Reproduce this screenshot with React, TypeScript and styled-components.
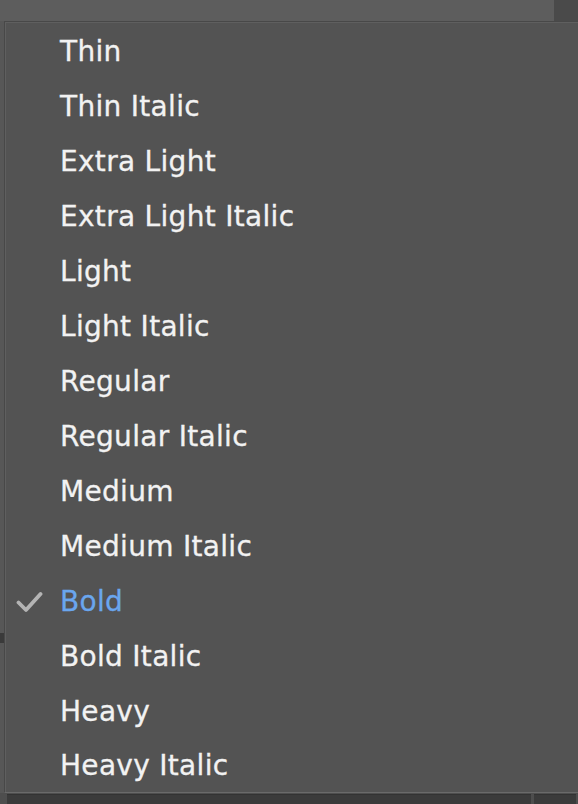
import styled, { createGlobalStyle } from "styled-components"

const GlobalStyle = createGlobalStyle`
  html, body {
    margin: 0;
    padding: 0;
    background: #5b5b5b;
  }
  body {
    font-family: "DejaVu Sans", "Open Sans", sans-serif;
  }
`

const weights = [
  "Thin",
  "Thin Italic",
  "Extra Light",
  "Extra Light Italic",
  "Light",
  "Light Italic",
  "Regular",
  "Regular Italic",
  "Medium",
  "Medium Italic",
  "Bold",
  "Bold Italic",
  "Heavy",
  "Heavy Italic",
]

const selected = "Bold"

const CheckIcon = () => (
  <svg width="27" height="22" viewBox="0 0 27 22">
    <path
      d="M2.5 11.5 L10 19 L24.5 3"
      fill="none"
      stroke="#b4b4b4"
      strokeWidth="3.8"
      strokeLinecap="round"
      strokeLinejoin="round"
    />
  </svg>
)

const App = () => {
  return (
    <Page>
      <GlobalStyle />
      <TopBar>
        <TopFill />
        <TopCorner />
      </TopBar>
      <Middle>
        <Gutter>
          <GutterBand />
        </Gutter>
        <Menu>
          {weights.map((w) => (
            <Item key={w} $active={w === selected}>
              <Check>{w === selected && <CheckIcon />}</Check>
              <Label>{w}</Label>
            </Item>
          ))}
        </Menu>
      </Middle>
      <Bottom>
        <BottomPanel $wide />
        <BottomPanel />
      </Bottom>
    </Page>
  )
}

const Page = styled.div`
  width: 578px;
  height: 804px;
  overflow: hidden;
  display: flex;
  flex-direction: column;
  background: #5b5b5b;
`

const TopBar = styled.div`
  height: 21px;
  display: flex;
  flex-shrink: 0;
`

const TopFill = styled.div`
  flex: 1;
  background: #5d5d5d;
`

const TopCorner = styled.div`
  width: 24px;
  background: #4a4a4a;
`

const Middle = styled.div`
  display: flex;
  height: 772px;
  flex-shrink: 0;
`

const Gutter = styled.div`
  width: 4px;
  flex-shrink: 0;
  background: #575757;
  padding-top: 612px;
  box-sizing: border-box;
`

const GutterBand = styled.div`
  height: 10px;
  background: #3a3a3a;
`

const Menu = styled.div`
  flex: 1;
  margin-right: -20px;
  background: #535353;
  border-top: 1px solid #484848;
  border-left: 1px solid #484848;
  border-bottom: 1px solid #6a6a6a;
  box-shadow: inset 1px 1px 0 #5f5f5f;
  padding-top: 1px;
  display: flex;
  flex-direction: column;
`

const Item = styled.div<{ $active?: boolean }>`
  height: 55px;
  display: flex;
  align-items: center;
  color: ${(p) => (p.$active ? "#6aa6ee" : "#f2f2f2")};
  font-size: 28px;
  letter-spacing: 0.3px;
`

const Check = styled.span`
  width: 55px;
  padding-left: 11px;
  padding-top: 4px;
  box-sizing: border-box;
  display: flex;
  align-items: center;
  flex-shrink: 0;
`

const Label = styled.span`
  line-height: 1;
  padding-top: 4px;
  white-space: nowrap;
  -webkit-text-stroke: 0.3px currentColor;
`

const Bottom = styled.div`
  flex: 1;
  display: flex;
  gap: 3px;
  padding: 1px 2px 0 7px;
  background: #4e4e4e;
`

const BottomPanel = styled.div<{ $wide?: boolean }>`
  ${(p) => (p.$wide ? "flex: 1;" : "width: 42px;")}
  background: #3b3b3b;
  border-top: 1px solid #333;
`

export default App
